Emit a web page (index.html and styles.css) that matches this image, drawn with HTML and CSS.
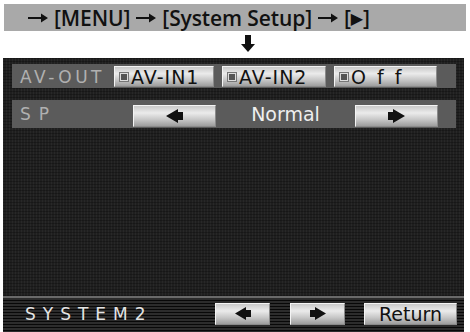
FILE: index.html
```html
<!DOCTYPE html>
<html lang="en">
<head>
  <meta charset="UTF-8">
  <title>System Setup</title>
  <link rel="stylesheet" href="styles.css">
</head>
<body>
  <div class="path-bar">
    <svg class="arr" width="20" height="10" viewBox="0 0 20 10"><path d="M0 4h13V0.5L20 5l-7 4.5V6H0z" fill="#111"/></svg>
    <span>[MENU]</span>
    <svg class="arr" width="20" height="10" viewBox="0 0 20 10"><path d="M0 4h13V0.5L20 5l-7 4.5V6H0z" fill="#111"/></svg>
    <span>[System Setup]</span>
    <svg class="arr" width="20" height="10" viewBox="0 0 20 10"><path d="M0 4h13V0.5L20 5l-7 4.5V6H0z" fill="#111"/></svg>
    <span>[<span class="tri">&#9654;</span>]</span>
  </div>
  <div class="down">
    <svg width="14" height="17" viewBox="0 0 14 17"><path d="M4 0h6v9h4l-7 8-7-8h4z" fill="#111"/></svg>
  </div>
  <div class="screen">
    <div class="row row-av">
      <div class="label">AV-OUT</div>
      <div class="btn w100"><span class="dot"></span>AV-IN1</div>
      <div class="btn w104"><span class="dot"></span>AV-IN2</div>
      <div class="btn w103"><span class="dot"></span>Off</div>
    </div>
    <div class="row row-sp">
      <div class="label sp">SP</div>
      <div class="btn arrow-btn">
        <svg width="17" height="14" viewBox="0 0 17 14"><path d="M0 7L12 0v14z M12 3h5v8h-5z" fill="#111"/></svg>
      </div>
      <div class="value">Normal</div>
      <div class="btn arrow-btn">
        <svg width="17" height="14" viewBox="0 0 17 14"><path d="M17 7L5 0v14z M0 3h5v8H0z" fill="#111"/></svg>
      </div>
    </div>
    <div class="fill"></div>
    <div class="foot">
      <div class="foot-title">SYSTEM2</div>
      <div class="btn small">
        <svg width="16" height="13" viewBox="0 0 16 13"><path d="M0 6.5L11 0v13z M11 3h5v7h-5z" fill="#111"/></svg>
      </div>
      <div class="btn small">
        <svg width="16" height="13" viewBox="0 0 16 13"><path d="M16 6.5L5 0v13z M0 3h5v7H0z" fill="#111"/></svg>
      </div>
      <div class="btn ret">Return</div>
    </div>
  </div>
</body>
</html>
```

FILE: styles.css
```css
* {
  box-sizing: border-box;
  margin: 0;
  padding: 0;
}
body {
  background: #fff;
  width: 470px;
  height: 332px;
  overflow: hidden;
}
.path-bar {
  margin: 4px 4px 0 4px;
  height: 27px;
  background: #a9a9a9;
  padding-left: 24px;
  display: flex;
  align-items: center;
  gap: 6px;
  font-family: 'Open Sans', sans-serif;
  font-weight: 600;
  font-size: 21px;
  color: #111;
  white-space: nowrap;
  letter-spacing: -0.1px;
}
.path-bar .tri {
  font-family: 'DejaVu Sans', sans-serif;
  font-size: 16px;
  position: relative;
  top: -2px;
}
.down {
  height: 27px;
  padding-left: 241px;
  padding-top: 4px;
}
.screen {
  margin: 0 6px 0 3px;
  height: 274px;
  background-color: #1f1f1f;
  background-image:
    repeating-linear-gradient(0deg, rgba(0,0,0,0.25) 0 1px, transparent 1px 3px),
    repeating-linear-gradient(90deg, rgba(255,255,255,0.04) 0 1px, transparent 1px 3px);
  padding: 6px 8px 0 9px;
  display: flex;
  flex-direction: column;
  font-family: 'DejaVu Sans', sans-serif;
}
.row {
  display: flex;
  align-items: center;
  background: #5b5b5b;
}
.row-av {
  height: 24px;
  padding-top: 1px;
  gap: 8px;
}
.row-sp {
  margin-top: 12px;
  height: 28px;
  align-items: flex-end;
  padding-bottom: 1px;
}
.label {
  width: 94px;
  padding-left: 8px;
  color: #b0b0b0;
  font-size: 17px;
  letter-spacing: 3.5px;
  white-space: nowrap;
  overflow: hidden;
}
.label.sp {
  width: 121px;
  align-self: center;
  letter-spacing: 8px;
}
.btn {
  height: 21px;
  display: flex;
  align-items: center;
  justify-content: center;
  color: #111;
  font-size: 19px;
  white-space: nowrap;
  background: linear-gradient(#c9c9c9, #ebebeb 35%, #c4c4c4 70%, #9d9d9d);
  border: 1px solid #f4f4f4;
  border-right-color: #8a8a8a;
  border-bottom-color: #8a8a8a;
}
.w100 { width: 100px; }
.w104 { width: 104px; }
.w103 { width: 103px; }
.row-av .btn {
  justify-content: flex-start;
  padding-left: 5px;
  letter-spacing: 1px;
}
.row-av .w103 {
  letter-spacing: 11px;
}
.dot {
  width: 8px;
  height: 8px;
  background: #555;
  border: 1px solid #ddd;
  margin-right: 3px;
  box-shadow: 0 0 0 1px #777;
}
.arrow-btn {
  width: 83px;
  height: 22px;
}
.value {
  width: 139px;
  text-align: center;
  color: #eee;
  font-size: 19px;
  align-self: center;
}
.fill {
  flex: 1;
}
.foot {
  margin: 0 -8px 0 -9px;
  height: 36px;
  border-top: 2px solid #6a6a6a;
  background: repeating-linear-gradient(180deg, #2c2c2c 0 2px, #080808 2px 3px);
  display: flex;
  align-items: center;
  padding-bottom: 3px;
}
.foot-title {
  width: 212px;
  padding-left: 22px;
  color: #e4e4e4;
  font-size: 17px;
  letter-spacing: 7px;
}
.btn.small {
  width: 55px;
  height: 22px;
  margin-right: 20px;
}
.btn.small + .btn.small {
  margin-right: 19px;
}
.btn.ret {
  width: 93px;
  height: 22px;
  font-size: 19px;
}
```
